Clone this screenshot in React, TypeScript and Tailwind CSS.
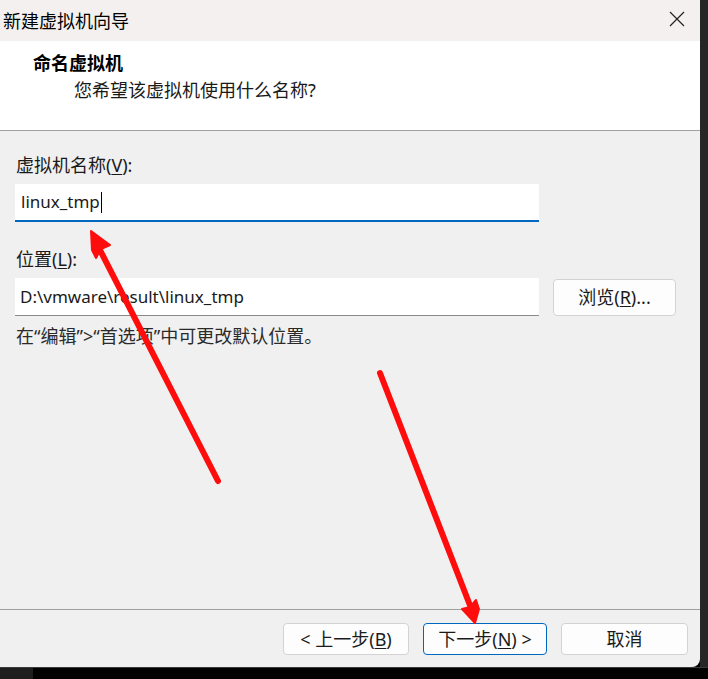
import React from 'react';

const font = "font-['Segoe_UI','Noto_Sans','Noto_Sans_CJK_SC',sans-serif]";

function Key({ k }: { k: string }) {
  return <span className="underline underline-offset-2 decoration-1">{k}</span>;
}

function Btn({ children, primary }: { children: React.ReactNode; primary?: boolean }) {
  return (
    <button
      className={
        'flex h-[32px] w-full items-center justify-center rounded-[4px] bg-[#fdfdfd] text-[18px] leading-none text-[#1b1b1b] ' +
        (primary ? 'border border-[#0067c0]' : 'border border-[#d3d3d3]')
      }
    >
      {children}
    </button>
  );
}

function Arrows() {
  return (
    <svg className="pointer-events-none absolute left-0 top-0" width="708" height="679" viewBox="0 0 708 679">
      <g fill="#ff0d0d" stroke="#ff0d0d" strokeLinecap="round" strokeLinejoin="round">
        <line x1="218" y1="481" x2="100" y2="250" strokeWidth="6" />
        <polygon points="91,231 110,245 101,249 96,258 92,250" strokeWidth="2" />
        <line x1="380" y1="373" x2="471" y2="608" strokeWidth="6" />
        <polygon points="475,623 462,609 470,607 476,600 479,609" strokeWidth="2" />
      </g>
    </svg>
  );
}

export default function App() {
  return (
    <div className={`relative h-[679px] w-[708px] overflow-hidden bg-black ${font}`}>
      <div className="flex">
        <div className="flex h-[667px] w-[700px] flex-col overflow-hidden rounded-br-[8px] bg-[#f0f0f0] text-[#1a1a1a]">
          {/* title bar */}
          <div className="flex h-[41px] items-center justify-between bg-[#f4f0ef] pl-[3px] pr-[15px]">
            <span className="text-[18px] leading-[24px] text-black">新建虚拟机向导</span>
            <svg width="16" height="16" viewBox="0 0 16 16" className="mt-[-3px]">
              <path d="M1 1 L15 15 M15 1 L1 15" stroke="#222" strokeWidth="1.2" />
            </svg>
          </div>

          {/* header */}
          <div className="h-[90px] border-b border-[#a0a0a0] bg-white pt-[10px]">
            <div className="pl-[33px] text-[18px] font-bold leading-[24px] text-black">命名虚拟机</div>
            <div className="mt-[3px] pl-[74px] text-[18px] leading-[24px] text-[#1a1a1a]">您希望该虚拟机使用什么名称?</div>
          </div>

          {/* body */}
          <div className="flex flex-1 flex-col px-[15px] pt-[22px]">
            <div className="pl-[1px] text-[18px] leading-[24px]">
              虚拟机名称(<Key k="V" />):
            </div>
            <div className="mt-[7px] flex h-[38px] w-[524px] items-center border-b-2 border-[#0067c0] bg-white pl-[6px] text-[17px]">
              <span>linux_tmp</span>
              <span className="ml-[1px] h-[21px] w-[1px] bg-black" />
            </div>

            <div className="mt-[25px] pl-[1px] text-[18px] leading-[24px]">
              位置(<Key k="L" />):
            </div>
            <div className="mt-[7px] flex items-center gap-[14px]">
              <div className="flex h-[38px] w-[524px] items-center border-b border-[#8a8a8a] bg-white pl-[5px] text-[17px]">
                D:\vmware\result\linux_tmp
              </div>
              <button className="flex h-[37px] w-[123px] items-center justify-center rounded-[4px] border border-[#d3d3d3] bg-[#fdfdfd] text-[18px]">
                浏览(<Key k="R" />)...
              </button>
            </div>

            <div className="mt-[8px] pl-[1px] text-[18px] leading-[24px] text-[#2a2a2a]">
              在“编辑”&gt;“首选项”中可更改默认位置。
            </div>
          </div>

          {/* footer */}
          <div className="flex h-[58px] justify-end gap-[14px] border-t border-[#a0a0a0] pr-[12px] pt-[13px]">
            <div className="w-[126px]">
              <Btn>
                &lt; 上一步(<Key k="B" />)
              </Btn>
            </div>
            <div className="w-[124px]">
              <Btn primary>
                下一步(<Key k="N" />) &gt;
              </Btn>
            </div>
            <div className="w-[127px]">
              <Btn>取消</Btn>
            </div>
          </div>
        </div>
        <div className="h-[667px] w-[8px] bg-[#262626]" />
      </div>
      <div className="flex h-[12px] border-t border-[#3a3a3a]">
        <div className="w-[33px] bg-[#1e1e1e]" />
        <div className="flex-1 bg-black" />
      </div>
      <Arrows />
    </div>
  );
}
